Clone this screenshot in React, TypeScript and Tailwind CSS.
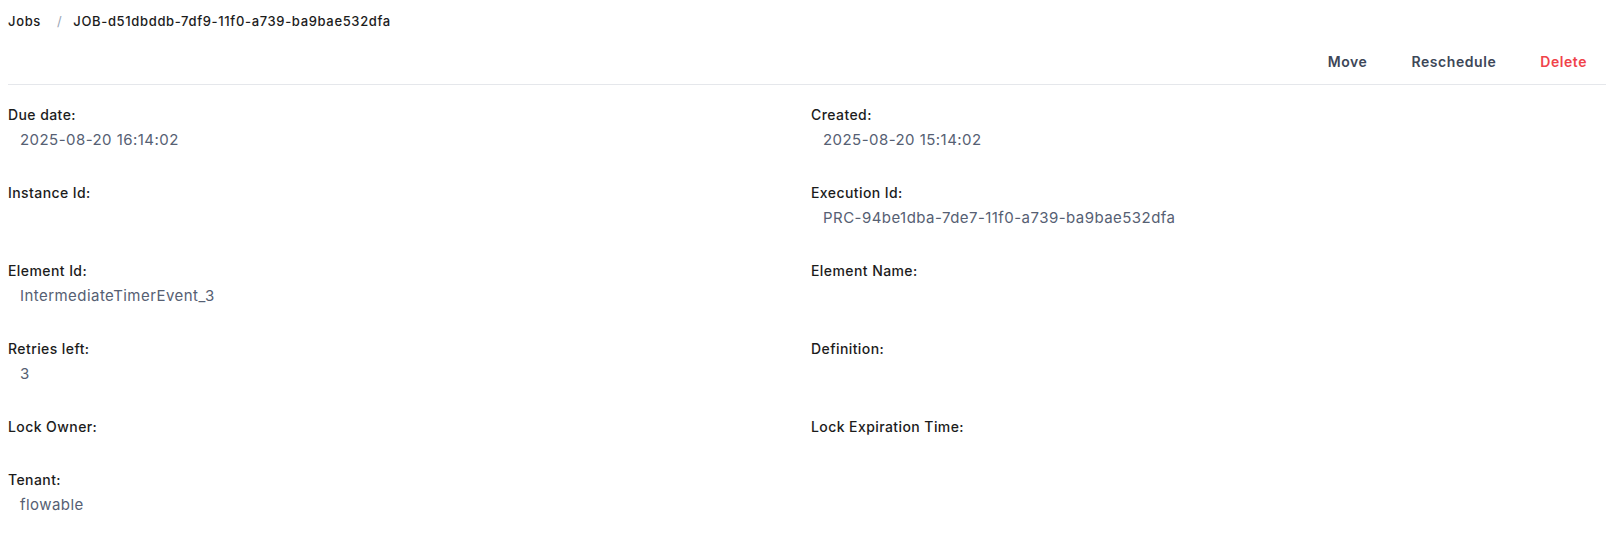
const rows = [
  [
    { label: "Due date:", value: "2025-08-20 16:14:02" },
    { label: "Created:", value: "2025-08-20 15:14:02" },
  ],
  [
    { label: "Instance Id:", value: "" },
    { label: "Execution Id:", value: "PRC-94be1dba-7de7-11f0-a739-ba9bae532dfa" },
  ],
  [
    { label: "Element Id:", value: "IntermediateTimerEvent_3" },
    { label: "Element Name:", value: "" },
  ],
  [
    { label: "Retries left:", value: "3" },
    { label: "Definition:", value: "" },
  ],
  [
    { label: "Lock Owner:", value: "" },
    { label: "Lock Expiration Time:", value: "" },
  ],
  [{ label: "Tenant:", value: "flowable" }],
];

function Field({ label, value }: { label: string; value: string }) {
  return (
    <div className="px-2 pb-[33px]">
      <div className="text-[14px] leading-5 font-medium tracking-[0.03em] text-[#1c1c1c]">{label}</div>
      {value && (
        <div className="pl-3 mt-[3px] -mb-[2px] text-[15px] leading-6 tracking-[0.03em] text-[#566073]">{value}</div>
      )}
    </div>
  );
}

export default function App() {
  return (
    <div className="w-full bg-white font-['Inter',sans-serif]">
      <div className="pt-3">
        {/* breadcrumb */}
        <div className="flex items-center px-2 h-5 text-[13px] font-medium tracking-[0.05em] text-[#1c1c1c]">
          <span>Jobs</span>
          <span className="ml-[16px] mr-[11px] text-[#9aa6b6] font-normal">/</span>
          <span>JOB-d51dbddb-7df9-11f0-a739-ba9bae532dfa</span>
        </div>

        <div className="ml-2 mt-5 pb-3 border-b border-[#e5e7eb] flex justify-end gap-[44px] pr-[19px] text-[14px] leading-5 font-semibold tracking-[0.04em]">
          <button className="text-[#3d4758]">Move</button>
          <button className="text-[#3d4758]">Reschedule</button>
          <button className="text-[#f0434a]">Delete</button>
        </div>
      </div>

      <div className="grid grid-cols-2 pt-[20px]">
        {rows.map((row, i) =>
          row.map((f, j) => <Field key={i + "-" + j} label={f.label} value={f.value} />)
        )}
      </div>
    </div>
  );
}
